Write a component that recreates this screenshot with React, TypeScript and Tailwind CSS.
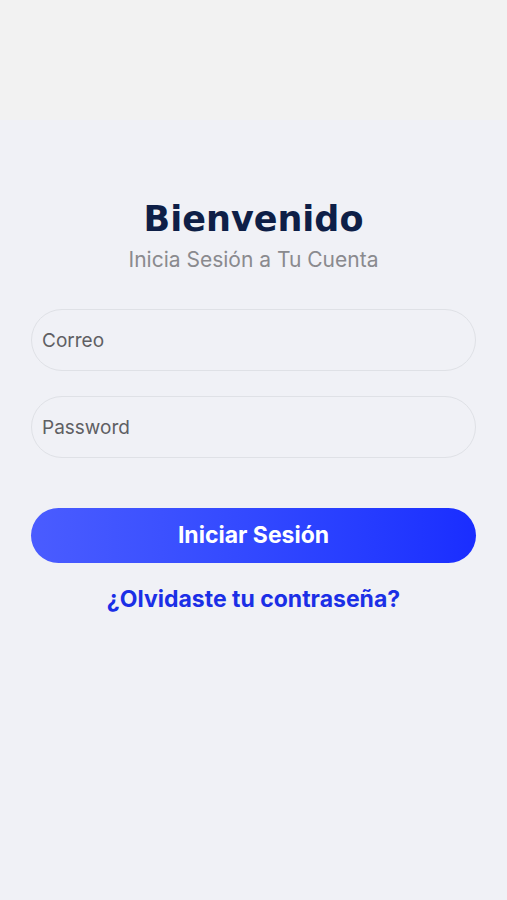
export default function App() {
  return (
    <div className="min-h-[900px] w-full bg-[#f0f1f6] font-['Inter',sans-serif]">
      {/* top bar area */}
      <div className="h-[120px] bg-[#f2f2f2]" />

      <div className="flex flex-col px-[31px] pt-[77px]">
        <h1 className="text-center font-['DejaVu_Sans',sans-serif] text-[35px] leading-[44px] font-bold text-[#0e1f47]">
          Bienvenido
        </h1>
        <p className="mt-[7px] text-center text-[21px] leading-[24px] text-[#8a8a8e]">
          Inicia Sesión a Tu Cuenta
        </p>

        <div className="mt-[37px] flex flex-col gap-[25px]">
          <input
            placeholder="Correo"
            className="h-[62px] w-full rounded-full border border-[#dfe1e6] bg-[#f0f1f6] px-[10px] text-[19px] text-[#3c3c40] placeholder:text-[#5f5f63] outline-none"
          />
          <input
            type="password"
            placeholder="Password"
            className="h-[62px] w-full rounded-full border border-[#dfe1e6] bg-[#f0f1f6] px-[10px] text-[19px] text-[#3c3c40] placeholder:text-[#5f5f63] outline-none"
          />
        </div>

        <button className="mt-[50px] h-[55px] w-full rounded-full bg-gradient-to-r from-[#4a5cff] to-[#1a2dff] text-[23px] font-bold text-white">
          Iniciar Sesión
        </button>

        <a className="mt-[21px] text-center text-[23px] leading-[30px] font-bold text-[#1b2fe6]">
          ¿Olvidaste tu contraseña?
        </a>
      </div>
    </div>
  );
}
